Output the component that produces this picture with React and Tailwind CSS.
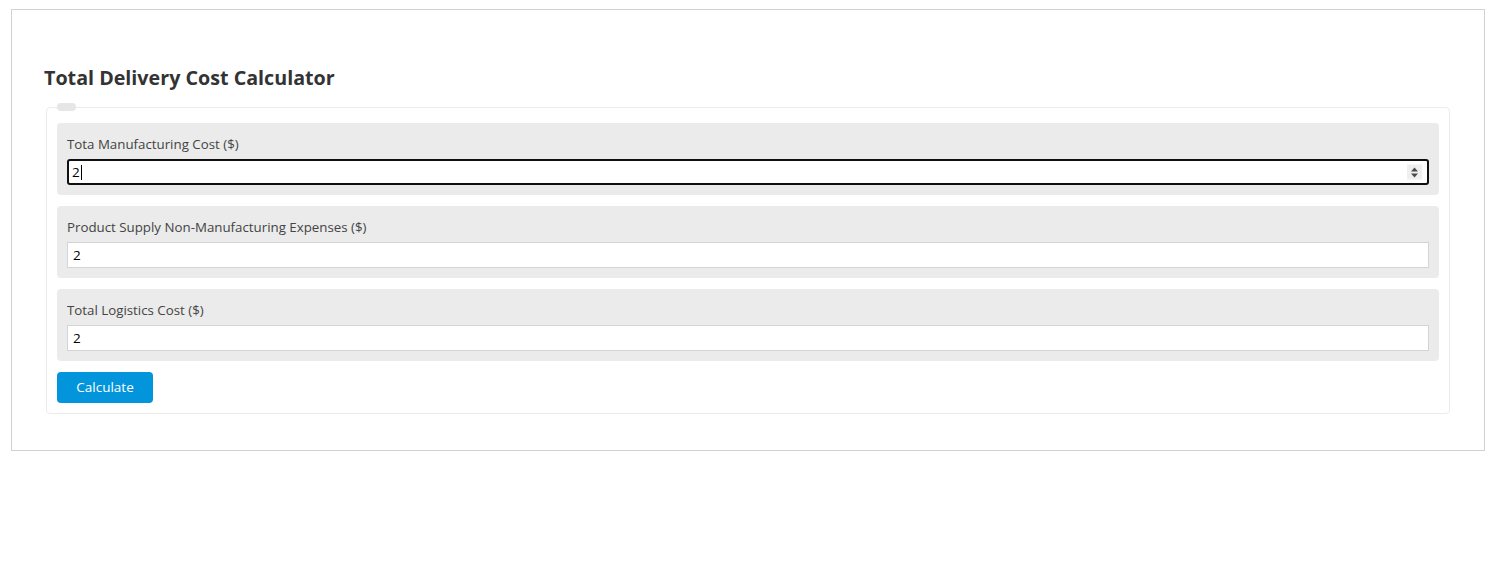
import React from "react";

function Spinner() {
  return (
    <div className="absolute right-[7px] top-1/2 -translate-y-1/2 w-[15px] h-[15px] bg-[#efefef] flex items-center justify-center">
      <svg width="9" height="12" viewBox="0 0 9 12">
        <path d="M4.5 1 L8 5 L1 5 Z" fill="#4a4a4a" />
        <path d="M4.5 11 L8 7 L1 7 Z" fill="#4a4a4a" />
      </svg>
    </div>
  );
}

function Field({ label, focused }) {
  return (
    <div className="bg-[#eaebea] rounded-[4px] px-[10px] pt-[12px] pb-[10px]">
      <label className="block text-[13.3px] leading-[19px] text-[#444] mb-[5px]">{label}</label>
      <div className="relative">
        {focused ? (
          <div className="h-[26px] border-2 border-[#101010] rounded-[3px] bg-white flex items-center pl-[3px] text-[13.5px] text-black">
            <span>2</span>
            <span className="inline-block w-px h-[15px] bg-black ml-px" />
            <Spinner />
          </div>
        ) : (
          <input
            type="text"
            readOnly
            value="2"
            className="block w-full h-[26px] border border-[#d4d4d4] bg-white pl-[5px] text-[13.5px] text-black outline-none"
          />
        )}
      </div>
    </div>
  );
}

export default function App() {
  return (
    <div className="bg-white min-h-[562px] pt-[9px] pl-[11px]" style={{ fontFamily: '"Open Sans", "Noto Sans", sans-serif' }}>
      <div className="w-[1474px] border border-[#d2d2d2] px-[34px] pt-[54px] pb-[36px]">
        <h2 className="text-[19.7px] leading-[28px] font-bold text-[#333] mb-[11px] -ml-[2px]">Total Delivery Cost Calculator</h2>
        <fieldset className="border border-[#ececec] rounded-[4px] px-[10px] pb-[10px] pt-[12px] m-0">
          <legend className="w-[19px] h-[8px] bg-[#e6e6e6] rounded-full ml-0 p-0" />
          <div className="flex flex-col gap-[11px]">
            <Field label="Tota Manufacturing Cost ($)" focused />
            <Field label="Product Supply Non-Manufacturing Expenses ($)" />
            <Field label="Total Logistics Cost ($)" />
          </div>
          <button className="mt-[11px] w-[96px] h-[31px] rounded-[4px] bg-[#0295db] text-white text-[13.5px]">Calculate</button>
        </fieldset>
      </div>
    </div>
  );
}
